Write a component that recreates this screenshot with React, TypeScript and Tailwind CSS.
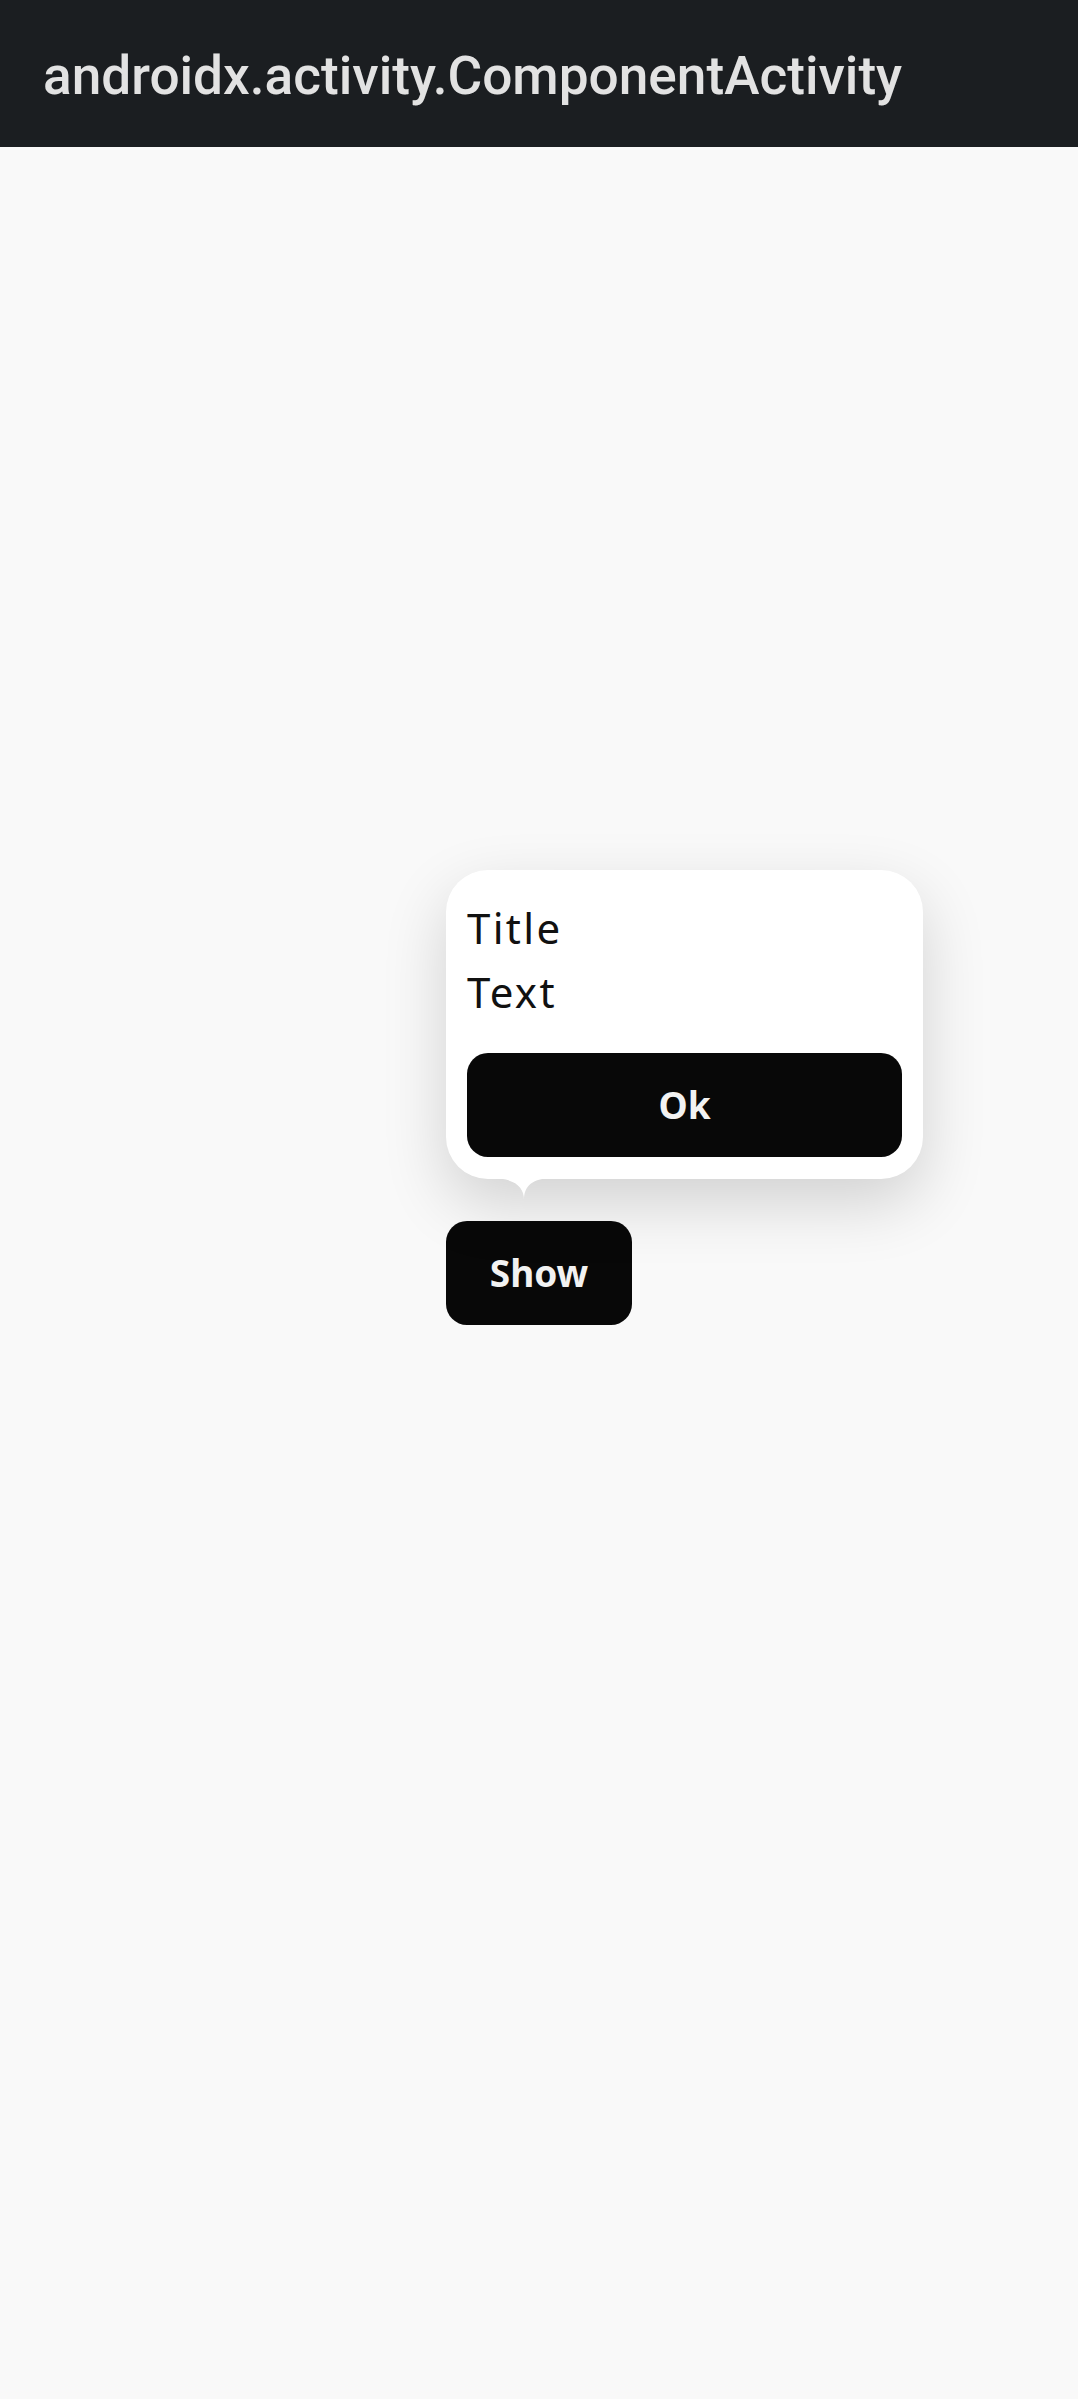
import React from 'react'

const Arrow = () => (
  <svg width="64" height="22" viewBox="0 0 64 22" className="block">
    <path d="M0 0 C24 0 34 8 34 22 C34 8 42 0 64 0 Z" fill="#ffffff" />
  </svg>
)

function Popup({ onOk }: { onOk: () => void }): React.JSX.Element {
  return (
    <div className="absolute bottom-[125px] left-0 w-[477px]">
      <div className="rounded-[42px] bg-white px-[21px] pb-[22px] pt-[26px] shadow-[0_24px_64px_rgba(0,0,0,0.16)]">
        <div className="text-[42px] leading-[64px] tracking-[2.3px] text-[#111111]">Title</div>
        <div className="text-[42px] leading-[64px] tracking-[2.3px] text-[#111111]">Text</div>
        <button
          onClick={onOk}
          className="mt-[29px] flex h-[104px] w-full items-center justify-center rounded-[21px] bg-[#080808] text-[37px] font-bold text-[#f2f2f2]"
        >
          Ok
        </button>
      </div>
      <div className="-mt-px pl-[44px]">
        <Arrow />
      </div>
    </div>
  )
}

export default function App(): React.JSX.Element {
  const [open, setOpen] = React.useState(true)

  return (
    <div className="flex h-[2399px] w-full flex-col bg-[#f9f9f9] font-['Noto_Sans',sans-serif]">
      <div className="flex h-[147px] shrink-0 items-center bg-[#1b1e21] px-[43px] pt-[6px]">
        <span className="font-['Roboto',sans-serif] text-[53.2px] font-medium text-[#e2e2e2]">
          androidx.activity.ComponentActivity
        </span>
      </div>
      <div className="flex flex-1 items-center justify-center">
        <div className="relative">
          {open && <Popup onOk={() => setOpen(false)} />}
          <button
            onClick={() => setOpen(true)}
            className="flex h-[104px] w-[186px] items-center justify-center rounded-[21px] bg-[#080808] text-[37px] font-bold text-[#f2f2f2]"
          >
            Show
          </button>
        </div>
      </div>
    </div>
  )
}
